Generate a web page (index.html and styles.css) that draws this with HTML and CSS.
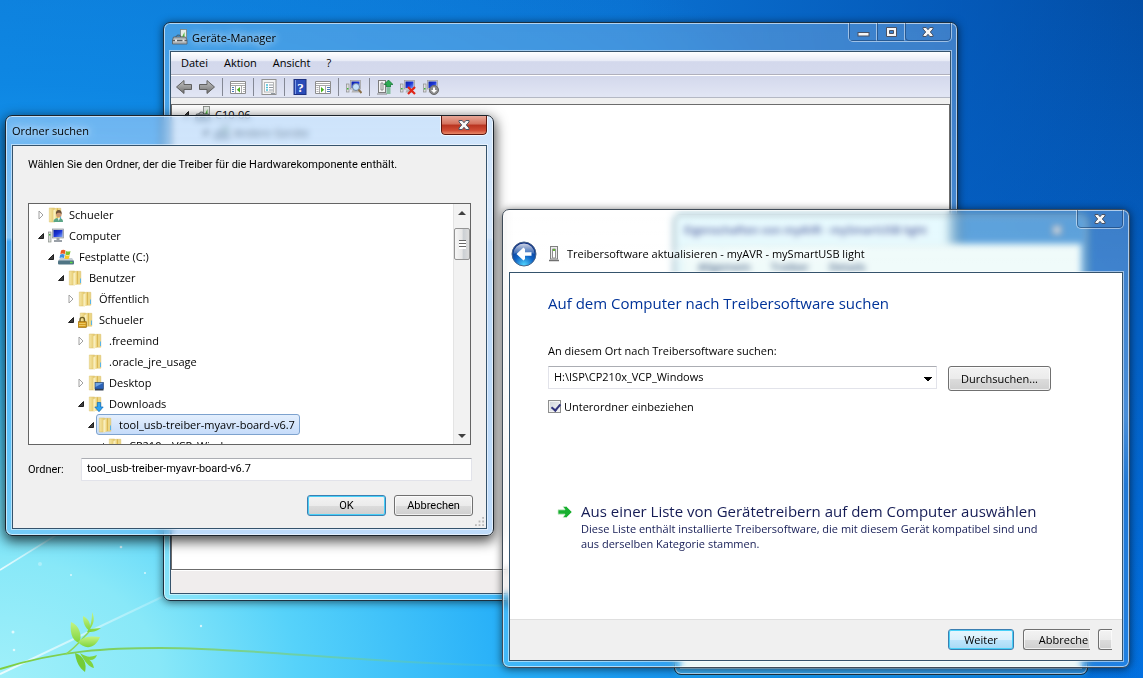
FILE: index.html
```html
<!DOCTYPE html>
<html lang="de">
<head>
    <meta charset="UTF-8">
    <meta name="viewport" content="width=device-width, initial-scale=1.0">
    <title>Treibersoftware aktualisieren</title>
    <link rel="stylesheet" href="styles.css">
</head>
<body>

<!-- Shared icons -->
<svg class="sprite" aria-hidden="true">
    <defs>
        <linearGradient id="gFolder" x1="0" x2="1"><stop offset="0" stop-color="#f6e6a4"/><stop offset="1" stop-color="#e2c566"/></linearGradient>
        <linearGradient id="gFront" x1="0" x2="1"><stop offset="0" stop-color="#fdf8d8"/><stop offset=".6" stop-color="#f2dd8e"/><stop offset="1" stop-color="#d3aa3e"/></linearGradient>
        <linearGradient id="gScreen" x1="0" y1="0" x2="1" y2="1"><stop offset="0" stop-color="#0a1fa0"/><stop offset=".5" stop-color="#1c35d8"/><stop offset="1" stop-color="#7fa6f4"/></linearGradient>
        <linearGradient id="gArrow" x1="0" y1="0" x2="0" y2="1"><stop offset="0" stop-color="#c4c4c4"/><stop offset="1" stop-color="#6e6e6e"/></linearGradient>
        <radialGradient id="gBack" cx=".5" cy=".95" r=".9"><stop offset="0" stop-color="#4fd4ff"/><stop offset=".45" stop-color="#0f63c4"/><stop offset="1" stop-color="#0a2a80"/></radialGradient>
        <linearGradient id="gShine" x1="0" y1="0" x2="0" y2="1"><stop offset="0" stop-color="#fff" stop-opacity=".8"/><stop offset="1" stop-color="#fff" stop-opacity=".15"/></linearGradient>
    </defs>
    <symbol id="folder" viewBox="0 0 16 16">
        <path d="M7.500 1.300h5.300v12.900H7.500z" fill="#ecd685" stroke="#d6bb60" stroke-width=".5"/>
        <path d="M1.300 1h5.400v14H1.300z" fill="url(#gFolder)" stroke="#d8be68" stroke-width=".5"/>
        <path d="M5.500 3.200L10 1v12.800l-4.500 2z" fill="url(#gFront)"/>
        <path d="M12 8.500h1v4.500h-1z" fill="#58b4e8"/>
    </symbol>
    <symbol id="folder-user" viewBox="0 0 16 16">
        <use href="#folder" width="16" height="16"/>
        <path d="M5.500 15c0-3 2-4 5-4s4.500 1 4.500 4z" fill="#5aa586"/>
        <path d="M9.500 11h2.500l-1.200 3z" fill="#e8f0ec"/>
        <circle cx="10.800" cy="7.500" r="2.700" fill="#cf9a72"/>
        <path d="M8 7.500c-.5-3 .8-4.500 2.800-4.500s3.300 1.500 2.800 4.500c-1-2.500-4.500-2.500-5.600 0z" fill="#6a5038"/>
    </symbol>
    <symbol id="computer" viewBox="0 0 16 16">
        <rect x=".500" y="4" width="2.500" height="10" fill="#d8dcd8" stroke="#8a8f8a" stroke-width=".7"/>
        <rect x="1" y="6" width="1.500" height="1.500" fill="#3cb43c"/>
        <rect x="4.500" y="1" width="11" height="9" fill="#c8ccd4" stroke="#8c929c" stroke-width=".7"/>
        <rect x="5.500" y="2" width="9" height="7" fill="url(#gScreen)"/>
        <path d="M8.500 10h3v2h2.500v2H6v-2h2.500z" fill="#9aa0a8"/>
    </symbol>
    <symbol id="disk" viewBox="0 0 16 16">
        <path d="M2 9h12l2 3H0z" fill="#c4ccd4"/>
        <rect x="0" y="11.500" width="16" height="4" rx="1" fill="#4f7484"/>
        <rect x="12" y="12.800" width="2.500" height="1.400" fill="#58e040"/>
        <path d="M3 1.500c1.500-1 3-1 4.500 0L6.800 5c-1.500-.8-3-.8-4.500 0z" fill="#ea5a22"/>
        <path d="M8 2c1.500.8 3 .8 4.500 0l-.7 3.500c-1.500.8-3 .8-4.500 0z" fill="#7cc230"/>
        <path d="M2.200 5.500c1.500-.8 3-.8 4.500 0L6 9c-1.500-.8-3-.8-4.500 0z" fill="#3c8ee0"/>
        <path d="M7.200 6c1.500.8 3 .8 4.500 0L11 9.500c-1.500.8-3 .8-4.500 0z" fill="#fac828"/>
    </symbol>
    <symbol id="folder-lock" viewBox="0 0 16 16">
        <use href="#folder" x="1" width="16" height="16"/>
        <path d="M2 10V8c0-3.500 4.500-3.500 4.500 0v2" fill="none" stroke="#6f6028" stroke-width="1.400"/>
        <rect x="0" y="9.500" width="8.500" height="6" rx=".5" fill="#d29a1e" stroke="#8f6510" stroke-width=".6"/>
        <path d="M1 11.500h6.500M1 13.500h6.500" stroke="#f3d474" stroke-width=".8"/>
    </symbol>
    <symbol id="folder-desktop" viewBox="0 0 16 16">
        <use href="#folder" width="16" height="16"/>
        <rect x="7" y="7.500" width="8.500" height="6.500" fill="#2b62b8" stroke="#20406c" stroke-width=".6"/>
        <path d="M7.500 8h7.500l-7.500 4z" fill="#74a8e4"/>
        <path d="M7 14h8.500v1.500H7z" fill="#303c50"/>
    </symbol>
    <symbol id="folder-down" viewBox="0 0 16 16">
        <use href="#folder" width="16" height="16"/>
        <path d="M9.300 6.500h3.400V11h2.500L11 15.700 6.800 11h2.500z" fill="#2ea4f4" stroke="#0b68b8" stroke-width=".7"/>
    </symbol>
    <symbol id="open" viewBox="0 0 10 10"><path d="M7.500 2.500v5h-5z" fill="#404040" stroke="#202020"/></symbol>
    <symbol id="closed" viewBox="0 0 10 10"><path d="M3 1l4 4-4 4z" fill="#fff" stroke="#a0a0a0"/></symbol>
    <symbol id="device" viewBox="0 0 16 16">
        <rect x="8.500" y=".500" width="6" height="10" fill="#e8ece8" stroke="#7c827c" stroke-width=".8"/>
        <path d="M10 8l2.500-5v5z" fill="#52b83c"/>
        <path d="M4 8c0-2.500 5-2.500 5 0" fill="none" stroke="#444c50"/>
        <path d="M1.500 8h12l1.500 3v4H.500v-4z" fill="#aeb4b8" stroke="#565c60" stroke-width=".8"/>
        <path d="M.500 11.500h14.500" stroke="#565c60"/>
        <rect x="3" y="10.500" width="2" height="2" fill="#e8e8e8"/><rect x="10.500" y="10.500" width="2" height="2" fill="#e8e8e8"/>
    </symbol>
    <symbol id="pc-small" viewBox="0 0 16 16">
        <rect x=".500" y="5" width="2.500" height="8" fill="#e0e0e0" stroke="#8c8c8c" stroke-width=".7"/>
        <rect x="1" y="9" width="1.500" height="1.500" fill="#3cb43c"/>
        <rect x="4.500" y="1.500" width="10" height="8.500" fill="#dcdcdc" stroke="#9a9a9a" stroke-width=".7"/>
        <rect x="5.500" y="2.500" width="8" height="6.500" fill="url(#gScreen)"/>
        <path d="M6.500 11h6l1 2.500h-8z" fill="#b4b4b4"/>
    </symbol>
    <symbol id="close-x" viewBox="0 0 12 10">
        <path d="M1 .500h3.200L6 2.700 7.800.500H11v1.400L8.300 5 11 8v1.500H7.800L6 7.300 4.200 9.500H1V8l2.700-3L1 1.900z" fill="#f6f6f6" stroke="#4a5264" stroke-width="1"/>
    </symbol>
</svg>

<main class="desktop">

    <!-- Wallpaper details -->
    <svg class="wallpaper" viewBox="0 0 520 170" aria-hidden="true">
        <defs>
            <linearGradient id="gStem" x1="0" x2="1"><stop offset="0" stop-color="#7fce3e"/><stop offset=".4" stop-color="#7ed27c"/><stop offset="1" stop-color="#5cc8b0" stop-opacity=".15"/></linearGradient>
            <linearGradient id="gLeaf" x1="0" y1="0" x2="0" y2="1"><stop offset="0" stop-color="#c4f484"/><stop offset="1" stop-color="#7fd43c"/></linearGradient>
            <linearGradient id="gBeam" x1="0" x2="1"><stop offset="0" stop-color="#fff" stop-opacity=".8"/><stop offset="1" stop-color="#fff" stop-opacity=".2"/></linearGradient>
        </defs>
        <path d="M0 62L58 26" stroke="url(#gBeam)" stroke-width="1.500"/>
        <path d="M0 166L162 89" stroke="url(#gBeam)" stroke-width="2"/>
        <path d="M0 161C60 142 110 140 160 140C260 140 340 154 510 158" fill="none" stroke="url(#gStem)" stroke-width="2"/>
        <path d="M66 146C78 138 82 130 90 123" fill="none" stroke="#8fd858" stroke-width="1.500"/>
        <path d="M71 114c8 3 12 14 8 21c-8-3-9-12-8-21z" fill="url(#gLeaf)"/>
        <path d="M83 108c6 3 8 8 7 15c-5-3-7-8-7-15z" fill="url(#gLeaf)"/>
        <path d="M92 104c3 6 2 12-2 17l11-1c-5 4-9 4-14 4c4-6 5-12 5-20z" fill="url(#gLeaf)"/>
        <path d="M78 134c6-6 14-6 22-5c-5 12-15 13-22 5z" fill="url(#gLeaf)"/>
        <path d="M75 145c9 3 12 11 10 19c-6-4-9-11-10-19z" fill="#74cc38"/>
        <path d="M80 145c8 5 10 4 17 2c-2 6-8 6-11 3c5 2 7 5 8 10c-5-1-9-6-14-15z" fill="#80d440"/>
        <g fill="#fff" fill-opacity=".7">
            <circle cx="13" cy="124" r="1.500"/><circle cx="14" cy="142" r="1.300"/><circle cx="201" cy="118" r="1.200"/>
            <circle cx="71" cy="67" r="1"/><circle cx="121" cy="39" r="1.300"/><circle cx="145" cy="65" r="1"/><circle cx="40" cy="56" r="2" fill-opacity=".3"/>
        </g>
    </svg>

    <!-- Geräte-Manager -->
    <section class="window device-manager">
        <header class="titlebar">
            <svg class="icon"><use href="#device"/></svg>
            <h1 class="title">Geräte-Manager</h1>
            <div class="caption">
                <button class="cap cap-small" aria-label="Minimieren"><svg width="13" height="10" viewBox="0 0 13 10"><rect x="1" y="5.500" width="11" height="3.500" fill="#f6f6f6" stroke="#4a5264"/></svg></button>
                <button class="cap cap-small" aria-label="Maximieren"><svg width="13" height="10" viewBox="0 0 13 10"><path d="M1.500.500h10v9h-10zM4.500 3.500v3h4v-3z" fill="#f6f6f6" fill-rule="evenodd" stroke="#4a5264"/></svg></button>
                <button class="cap" aria-label="Schließen"><svg width="12" height="10"><use href="#close-x"/></svg></button>
            </div>
        </header>
        <div class="pane">
            <nav class="menubar">
                <button class="menu">Datei</button>
                <button class="menu">Aktion</button>
                <button class="menu">Ansicht</button>
                <button class="menu">?</button>
            </nav>
            <div class="toolbar">
                <button class="tool" aria-label="Zurück"><svg class="icon" viewBox="0 0 16 16"><path d="M8 1.500v4h7.500v5H8v4L.500 8z" fill="url(#gArrow)" stroke="#606060"/></svg></button>
                <button class="tool" aria-label="Vorwärts"><svg class="icon" viewBox="0 0 16 16"><path d="M8 1.500v4H.500v5H8v4L15.500 8z" fill="url(#gArrow)" stroke="#606060"/></svg></button>
                <span class="sep"></span>
                <button class="tool" aria-label="Konsolenstruktur"><svg class="icon" viewBox="0 0 16 16"><path d="M.500 2.500h15v12H.500z" fill="#fff" stroke="#8c8c8c"/><path d="M1 4.500h14M1 6.500h14M5.500 7v7M11.500 7v7" stroke="#a8a8a8"/><path d="M2 8.500h2M2 10.500h2M2 12.500h2" stroke="#4878b8"/><path d="M13 8.500h2M13 10.500h2M13 12.500h2" stroke="#b0b0b0"/><path d="M10 8v5.500L6.800 10.800z" fill="#48b020"/></svg></button>
                <span class="sep"></span>
                <button class="tool" aria-label="Eigenschaften"><svg class="icon" viewBox="0 0 16 16"><rect x="1" y=".500" width="14" height="15" fill="#f4f4f4" stroke="#909090"/><rect x="3.500" y="3.500" width="9" height="9.500" fill="#fff" stroke="#b8b8b8"/><path d="M5 6h2M5 8.500h2M5 11h2" stroke="#48c0d8" stroke-width="1.500"/><path d="M8 6h4M8 8.500h4M8 11h4M10 14.500h4" stroke="#9098a0"/></svg></button>
                <span class="sep"></span>
                <button class="tool" aria-label="Hilfe"><svg class="icon" viewBox="0 0 16 16"><rect x="2" y=".500" width="12" height="15" fill="#2a4cb8" stroke="#1c3080"/><path d="M3.500 1v14" stroke="#7c98e4"/><text x="8.500" y="12.500" class="help-mark">?</text></svg></button>
                <button class="tool" aria-label="Aktionsbereich"><svg class="icon" viewBox="0 0 16 16"><path d="M.500 2.500h15v12H.500z" fill="#fff" stroke="#8c8c8c"/><path d="M1 4.500h14M1 6.500h14M4.500 7v7M10.500 7v7" stroke="#a8a8a8"/><path d="M1.500 8.500h2M1.500 10.500h2M1.500 12.500h2" stroke="#b0b0b0"/><path d="M12 8.500h3M12 10.500h3M12 12.500h3" stroke="#4878b8"/><path d="M6 8v5.500l3.200-2.700z" fill="#48b020"/></svg></button>
                <span class="sep"></span>
                <button class="tool" aria-label="Nach geänderter Hardware suchen"><svg class="icon" viewBox="0 0 16 16"><use href="#pc-small" width="16" height="16"/><circle cx="10" cy="8" r="3.500" fill="#c4e0fa" stroke="#70849c"/><path d="M12.500 10.500l3 3.500" stroke="#8a7048" stroke-width="2"/></svg></button>
                <span class="sep"></span>
                <button class="tool" aria-label="Treibersoftware aktualisieren"><svg class="icon" viewBox="0 0 16 16"><rect x="1.500" y="1.500" width="7" height="12" fill="#f4f4f4" stroke="#7c7c7c"/><path d="M4 4h2v7H4zM0 15h10" fill="none" stroke="#888"/><path d="M11.500 1l4.500 4.500h-2.500V8h-4V5.500H7z" fill="#2cac50" stroke="#107030" stroke-width=".7"/><path d="M9.500 10h4M9.500 12h4M9.500 14h4" stroke="#2c9c4c"/></svg></button>
                <button class="tool" aria-label="Deinstallieren"><svg class="icon" viewBox="0 0 16 16"><use href="#pc-small" width="16" height="16"/><path d="M8 8l7 7M15 8l-7 7" stroke="#e02418" stroke-width="2.200"/></svg></button>
                <button class="tool" aria-label="Deaktivieren"><svg class="icon" viewBox="0 0 16 16"><use href="#pc-small" width="16" height="16"/><circle cx="11" cy="11" r="4.500" fill="#8c8c8c" stroke="#686868"/><path d="M10 8.500h2V11h2l-3 3-3-3h2z" fill="#fff"/></svg></button>
            </div>
            <div class="device-tree">
                <div class="device-row"><svg class="arrow"><use href="#open"/></svg><svg class="icon"><use href="#device"/></svg>C10-06</div>
                <div class="device-row device-child"><svg class="arrow"><use href="#open"/></svg><svg class="icon"><use href="#device"/></svg>Andere Geräte</div>
            </div>
            <div class="statusbar"></div>
        </div>
    </section>

    <!-- Eigenschaften, seen through the frame of the wizard -->
    <section class="window properties" aria-hidden="true">
        <header class="titlebar">
            <h2 class="title">Eigenschaften von myAVR - mySmartUSB light</h2>
            <svg width="12" height="10"><use href="#close-x"/></svg>
        </header>
        <div class="pane">
            <div class="tabs"><span>Allgemein</span><span>Treiber</span><span>Details</span></div>
        </div>
    </section>

    <!-- Ordner suchen -->
    <section class="window browse">
        <header class="titlebar">
            <h2 class="title">Ordner suchen</h2>
            <div class="caption caption-red">
                <button class="cap" aria-label="Schließen"><svg width="12" height="10"><use href="#close-x"/></svg></button>
            </div>
        </header>
        <div class="pane">
            <p class="hint">Wählen Sie den Ordner, der die Treiber für die Hardwarekomponente enthält.</p>
            <div class="tree-box">
                <ul class="tree">
                    <li><svg class="arrow"><use href="#closed"/></svg><span class="node"><svg class="icon"><use href="#folder-user"/></svg>Schueler</span></li>
                    <li><svg class="arrow"><use href="#open"/></svg><span class="node"><svg class="icon"><use href="#computer"/></svg>Computer</span></li>
                    <li class="level-1"><svg class="arrow"><use href="#open"/></svg><span class="node"><svg class="icon"><use href="#disk"/></svg>Festplatte (C:)</span></li>
                    <li class="level-2"><svg class="arrow"><use href="#open"/></svg><span class="node"><svg class="icon"><use href="#folder"/></svg>Benutzer</span></li>
                    <li class="level-3"><svg class="arrow"><use href="#closed"/></svg><span class="node"><svg class="icon"><use href="#folder"/></svg>Öffentlich</span></li>
                    <li class="level-3"><svg class="arrow"><use href="#open"/></svg><span class="node"><svg class="icon"><use href="#folder-lock"/></svg>Schueler</span></li>
                    <li class="level-4"><svg class="arrow"><use href="#closed"/></svg><span class="node"><svg class="icon"><use href="#folder"/></svg>.freemind</span></li>
                    <li class="level-4"><svg class="arrow"></svg><span class="node"><svg class="icon"><use href="#folder"/></svg>.oracle_jre_usage</span></li>
                    <li class="level-4"><svg class="arrow"><use href="#closed"/></svg><span class="node"><svg class="icon"><use href="#folder-desktop"/></svg>Desktop</span></li>
                    <li class="level-4"><svg class="arrow"><use href="#open"/></svg><span class="node"><svg class="icon"><use href="#folder-down"/></svg>Downloads</span></li>
                    <li class="level-5"><svg class="arrow"><use href="#open"/></svg><span class="node selected"><svg class="icon"><use href="#folder"/></svg>tool_usb-treiber-myavr-board-v6.7</span></li>
                    <li class="level-6"><svg class="arrow"><use href="#open"/></svg><span class="node"><svg class="icon"><use href="#folder"/></svg>CP210x_VCP_Windows</span></li>
                </ul>
                <div class="scrollbar">
                    <svg class="scroll-arrow" viewBox="0 0 16 17"><path d="M4 11l4-4 4 4z" fill="#404040"/></svg>
                    <div class="thumb"></div>
                    <svg class="scroll-arrow scroll-end" viewBox="0 0 16 17"><path d="M4 7l4 4 4-4z" fill="#404040"/></svg>
                </div>
            </div>
            <div class="folder-row">
                <label for="folder-name">Ordner:</label>
                <input type="text" id="folder-name" class="field" value="tool_usb-treiber-myavr-board-v6.7">
            </div>
            <div class="actions">
                <button class="btn btn-default">OK</button>
                <button class="btn">Abbrechen</button>
            </div>
            <svg class="grip" viewBox="0 0 10 10" aria-hidden="true"><path d="M8 0h2v2H8zM8 4h2v2H8zM4 4h2v2H4zM8 8h2v2H8zM4 8h2v2H4zM0 8h2v2H0z" fill="#b8b8b8"/></svg>
        </div>
    </section>

    <!-- Treibersoftware aktualisieren -->
    <section class="window wizard">
        <header class="titlebar">
            <button class="back" aria-label="Zurück">
                <svg width="26" height="26" viewBox="0 0 26 26">
                    <circle cx="13" cy="13" r="12" fill="url(#gBack)" stroke="#4a6488"/>
                    <path d="M2.500 13a10.500 10.500 0 0 1 21 0c-6-2-15-2-21 0z" fill="url(#gShine)"/>
                    <path d="M12.500 6.500l-7 6.500 7 6.500 1.500-1.500v-3.300h6.500v-3.400H14V8z" fill="#fff"/>
                </svg>
            </button>
            <svg width="12" height="16" viewBox="0 0 12 16"><rect x="2.500" y=".500" width="7" height="12.500" fill="#ececec" stroke="#808080"/><path d="M4.500 3h3v9h-3z" fill="#fff" stroke="#909090"/><rect x="5" y="3" width="2" height="2" fill="#60b830"/><path d="M1 14.500h10" stroke="#707070" stroke-width="1.500"/></svg>
            <h2 class="title">Treibersoftware aktualisieren - myAVR - mySmartUSB light</h2>
            <div class="caption">
                <button class="cap" aria-label="Schließen"><svg width="12" height="10"><use href="#close-x"/></svg></button>
            </div>
        </header>
        <div class="pane">
            <div class="page">
                <h3 class="page-title">Auf dem Computer nach Treibersoftware suchen</h3>
                <label class="path-label" for="driver-path">An diesem Ort nach Treibersoftware suchen:</label>
                <div class="path-row">
                    <select id="driver-path" class="combo"><option>H:\ISP\CP210x_VCP_Windows</option></select>
                    <button class="btn btn-browse">Durchsuchen...</button>
                </div>
                <div class="check-row">
                    <input type="checkbox" id="subfolders" class="check" checked>
                    <label for="subfolders">Unterordner einbeziehen</label>
                </div>
                <a class="command-link" href="#">
                    <svg width="16" height="14" viewBox="0 0 16 14"><path d="M1 4.800h7L6 1.500h3.500L15 7l-5.500 5.500H6l2-3.300H1z" fill="#18b030" stroke="#d4ecd4" stroke-width=".8"/></svg>
                    <span class="command-text">
                        <span class="command-title">Aus einer Liste von Gerätetreibern auf dem Computer auswählen</span>
                        <span class="command-note">Diese Liste enthält installierte Treibersoftware, die mit diesem Gerät kompatibel sind und aus derselben Kategorie stammen.</span>
                    </span>
                </a>
            </div>
            <footer class="wizard-footer">
                <button class="btn btn-default btn-next">Weiter</button>
                <button class="btn btn-cut">Abbreche</button>
                <button class="btn btn-cut btn-stub" aria-label="Abbrechen"></button>
            </footer>
        </div>
    </section>

</main>

</body>
</html>
```

FILE: styles.css
```css
* {
    box-sizing: border-box;
}

body {
    margin: 0;
    font-family: "Open Sans", "Noto Sans", sans-serif;
    font-size: 11px;
    line-height: 15px;
    color: #000;
}

h1, h2, h3, p, ul {
    margin: 0;
    padding: 0;
    font-size: 11px;
    font-weight: 400;
}

button, input, select {
    font-family: inherit;
    font-size: inherit;
    color: inherit;
    margin: 0;
}

button {
    border: none;
    background: none;
    padding: 0;
}

svg {
    display: block;
    flex: none;
}

.sprite {
    position: absolute;
    width: 0;
    height: 0;
}

.icon {
    width: 16px;
    height: 16px;
}

.arrow {
    width: 10px;
    height: 10px;
}

/* Desktop */
.desktop {
    position: relative;
    height: 100vh;
    overflow: hidden;
    background:
        radial-gradient(100% 125% at 0% 100%, #a0f0fa 0%, #88e8f8 14%, #56d2fa 26%, #28b0f8 44%, #1898f0 56%, rgba(14, 140, 232, 0.75) 70%, rgba(4, 112, 224, 0) 100%),
        linear-gradient(90deg, #0e78d4 0%, #0a70d0 55%, rgba(5, 96, 196, 0.6) 84%, rgba(3, 82, 174, 0) 100%),
        linear-gradient(180deg, #034ea6 0%, #0460c4 50%, #0270e0 100%);
}

.wallpaper {
    position: absolute;
    left: 0;
    bottom: 0;
    width: 520px;
    height: 170px;
}

/* Window frame */
.window {
    position: absolute;
    display: flex;
    flex-direction: column;
    padding: 0 6px 6px;
    border: 1px solid #1c3040;
    border-radius: 7px;
    background: linear-gradient(180deg, rgba(255, 255, 255, 0.22) 0%, rgba(255, 255, 255, 0.28) 45%, rgba(255, 255, 255, 0.12) 60%);
    backdrop-filter: blur(3px);
    box-shadow: inset 0 0 0 1px rgba(255, 255, 255, 0.6), 0 1px 8px rgba(0, 0, 0, 0.6);
}

.titlebar {
    display: flex;
    align-items: center;
    flex: none;
}

.title {
    flex: 1;
    text-shadow: 0 0 6px rgba(255, 255, 255, 0.7), 0 0 10px rgba(255, 255, 255, 0.6), 0 0 14px rgba(255, 255, 255, 0.5);
}

.pane {
    flex: 1;
    display: flex;
    flex-direction: column;
    min-height: 0;
    border: 1px solid #35536c;
    background: #f0f0f0;
    box-shadow: 0 0 0 1px rgba(255, 255, 255, 0.5);
}

.caption {
    display: flex;
    align-self: flex-start;
    margin-right: -1px;
    border: 1px solid rgba(255, 255, 255, 0.5);
    border-top: none;
    border-radius: 0 0 5px 5px;
    overflow: hidden;
}

.cap {
    display: flex;
    align-items: center;
    justify-content: center;
    width: 46px;
    height: 18px;
    border: 1px solid rgba(20, 50, 90, 0.5);
    border-top: none;
    border-radius: 0 0 4px 4px;
}

.cap-small {
    width: 28px;
    border-right-color: rgba(255, 255, 255, 0.5);
    border-radius: 0;
}

.caption-red {
    border-color: rgba(255, 255, 255, 0.7);
}

.caption-red .cap {
    height: 19px;
    border-color: #5c1810;
    background: linear-gradient(180deg, #e8a898 0%, #d4705c 45%, #b83420 50%, #d04c34 80%, #e88868 100%);
}

/* Geräte-Manager */
.device-manager {
    left: 163px;
    top: 22px;
    width: 795px;
    height: 579px;
}

.device-manager .titlebar {
    height: 28px;
    padding-left: 2px;
    gap: 4px;
}

.menubar {
    display: flex;
    height: 23px;
    padding: 0 0 2px 2px;
    border-bottom: 1px solid #b0b0bc;
    background: linear-gradient(180deg, #fff 0%, #e8ebf6 40%, #d3d8ec 44%, #d5daed 100%);
}

.menu {
    padding: 0 8px;
}

.toolbar {
    display: flex;
    align-items: center;
    height: 23px;
    padding-left: 5px;
    gap: 7px;
    border-top: 1px solid #fff;
    border-bottom: 1px solid #b4b8c4;
    background: linear-gradient(180deg, #d3d8ec, #e2e6f4);
}

.sep {
    width: 1px;
    height: 18px;
    background: #848894;
}

.help-mark {
    font-family: "Liberation Serif", serif;
    font-size: 13px;
    font-weight: 700;
    text-anchor: middle;
    fill: #fff;
}

.device-tree {
    flex: 1;
    margin-top: 6px;
    border: 1px solid #6c6c6c;
    background: #fff;
}

.device-row {
    display: flex;
    align-items: center;
    gap: 4px;
    height: 18px;
    padding-left: 9px;
}

.device-child {
    padding-left: 28px;
}

.statusbar {
    height: 23px;
    border-top: 1px solid #fff;
    background: #f0eded;
}

/* Eigenschaften */
.properties {
    left: 674px;
    top: 214px;
    width: 414px;
    height: 461px;
    background: rgba(150, 235, 255, 0.3);
    box-shadow: inset 0 0 0 1px rgba(255, 255, 255, 0.6), 0 0 5px rgba(60, 200, 240, 0.6);
}

.properties .titlebar {
    height: 29px;
    padding: 0 18px 0 3px;
    color: #102c80;
}

.properties .title {
    font-weight: 600;
}

.properties .pane {
    background: #ecfaf9;
    border-color: #b0dce8;
}

.tabs {
    display: flex;
    gap: 20px;
    padding: 16px 16px 0;
    line-height: 11px;
    font-weight: 600;
    color: #103060;
}

/* Ordner suchen */
.browse {
    left: 5px;
    top: 115px;
    width: 489px;
    height: 421px;
    background:
        linear-gradient(180deg, rgba(255, 255, 255, 0.25) 0%, rgba(255, 255, 255, 0.35) 29%, rgba(255, 255, 255, 0) 30%),
        rgba(110, 175, 245, 0.45);
    border-color: #1c242c;
    box-shadow: inset 0 0 0 1px rgba(255, 255, 255, 0.6), 0 4px 13px 1px rgba(0, 0, 0, 0.75);
}

.browse .titlebar {
    height: 29px;
}

.browse .pane {
    position: relative;
    padding: 11px 13px 0 15px;
    font-family: Roboto, sans-serif;
}

.hint {
    padding-bottom: 31px;
}

.tree-box {
    display: flex;
    height: 242px;
    margin-right: 2px;
    border: 1px solid #646464;
    background: #fff;
    font-family: "Open Sans", "Noto Sans", sans-serif;
}

.tree {
    flex: 1;
    padding-left: 7px;
    overflow: hidden;
    list-style: none;
}

.tree li {
    display: flex;
    align-items: center;
    height: 21px;
}

.level-1 { padding-left: 10px; }
.level-2 { padding-left: 20px; }
.level-3 { padding-left: 30px; }
.level-4 { padding-left: 40px; }
.level-5 { padding-left: 50px; }
.level-6 { padding-left: 60px; }

.node {
    display: flex;
    align-items: center;
    gap: 5px;
    height: 21px;
    padding: 0 4px 0 1px;
    border: 1px solid transparent;
    border-radius: 3px;
    white-space: nowrap;
}

.selected {
    border-color: #7da2ce;
    background: linear-gradient(180deg, #e4effd, #c6dcfa);
}

.scrollbar {
    display: flex;
    flex-direction: column;
    width: 17px;
    border-left: 1px solid #e4e4e4;
    background: #f2f2f2;
}

.scroll-arrow {
    width: 16px;
    height: 17px;
}

.scroll-end {
    margin-top: auto;
}

.thumb {
    height: 32px;
    margin-top: 7px;
    border: 1px solid #949494;
    border-radius: 2px;
    background:
        repeating-linear-gradient(180deg, #686868 0 1px, #fff 1px 3px) center / 7px 9px no-repeat,
        linear-gradient(90deg, #f6f6f6, #e6e6e6 50%, #ccd0d4 60%, #dcdcdc);
}

.folder-row {
    display: flex;
    align-items: center;
    margin-top: 13px;
}

.folder-row label {
    width: 53px;
}

.field {
    flex: 1;
    height: 23px;
    margin-right: 1px;
    padding: 0 5px 3px;
    border: 1px solid #e2e3ea;
    border-top-color: #abadb3;
    background: #fff;
}

.actions {
    display: flex;
    justify-content: flex-end;
    gap: 8px;
    margin-top: 14px;
}

.btn {
    width: 79px;
    height: 21px;
    border: 1px solid #707070;
    border-radius: 3px;
    background: linear-gradient(180deg, #f3f3f3 0%, #ebebeb 50%, #dcdcdc 51%, #cfcfcf 100%);
    box-shadow: inset 0 0 0 1px rgba(255, 255, 255, 0.7);
}

.btn-default {
    border-color: #3c7fb1;
    box-shadow: inset 0 0 0 1px #48d0f8;
}

.grip {
    position: absolute;
    right: 2px;
    bottom: 2px;
    width: 9px;
    height: 9px;
}

/* Treibersoftware aktualisieren */
.wizard {
    left: 502px;
    top: 209px;
    width: 628px;
    height: 459px;
    border-color: #404c58;
}

.wizard .titlebar {
    position: relative;
    height: 62px;
    padding: 25px 0 0 2px;
}

.wizard .titlebar .title {
    padding-left: 7px;
}

.wizard .caption {
    position: absolute;
    top: 0;
    right: 0;
}

.back {
    margin-right: 11px;
}

.wizard .pane {
    background: #fff;
}

.page {
    flex: 1;
    padding: 20px 71px 0 38px;
}

.page-title {
    font-size: 15px;
    line-height: 20px;
    color: #003399;
}

.path-label {
    display: block;
    margin-top: 30px;
}

.path-row {
    display: flex;
    align-items: flex-start;
    gap: 11px;
    margin-top: 8px;
}

.combo {
    flex: 1;
    height: 23px;
    padding: 0 5px 2px;
    border: 1px solid #e2e3ea;
    border-top-color: #abadb3;
    border-radius: 0;
    appearance: none;
    background:
        linear-gradient(135deg, #000 50%, transparent 51%) right 4px top 10px / 4px 4px no-repeat,
        linear-gradient(225deg, #000 50%, transparent 51%) right 8px top 10px / 4px 4px no-repeat,
        #fff;
}

.btn-browse {
    width: 103px;
    height: 25px;
}

.check-row {
    display: flex;
    align-items: center;
    gap: 3px;
    margin-top: 8px;
}

.check {
    width: 13px;
    height: 13px;
    border: 1px solid #8e8f8f;
    appearance: none;
    background: linear-gradient(135deg, #cfd4da, #f6f6f6);
    box-shadow: inset 0 0 0 1px #f4f4f4;
}

.check:checked::after {
    content: "";
    display: block;
    width: 4px;
    height: 7px;
    margin: 1px 0 0 4px;
    border: solid #31347c;
    border-width: 0 2px 2px 0;
    transform: rotate(40deg);
}

.command-link {
    display: flex;
    align-items: flex-start;
    gap: 8px;
    margin-top: 87px;
    padding-left: 9px;
    color: #151c55;
    text-decoration: none;
}

.command-link svg {
    margin-top: 4px;
}

.command-title {
    display: block;
    font-size: 15px;
    line-height: 20px;
    white-space: nowrap;
}

.command-note {
    display: block;
}

.wizard-footer {
    display: flex;
    justify-content: flex-end;
    height: 41px;
    padding: 9px 10px 0;
    border-top: 1px solid #dfdfdf;
    background: #f0f0f0;
}

.btn-next {
    width: 66px;
    margin-right: 9px;
    background: linear-gradient(180deg, #e8f6fd 0%, #d9f0fc 50%, #bee6fd 51%, #a7d9f5 100%);
}

.btn-cut {
    width: 67px;
    padding-left: 13px;
    border-right: none;
    border-radius: 3px 0 0 3px;
}

.btn-stub {
    width: 14px;
    margin-left: 8px;
    padding: 0;
}
```
